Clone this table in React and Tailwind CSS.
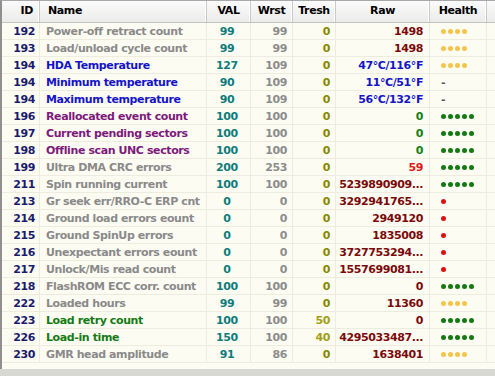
import React from 'react';

const rows = [
  { id: 192, name: 'Power-off retract count', nc: 'text-[#8a8a8a]', val: 99, wrst: 99, tresh: 0, raw: '1498', rc: 'text-[#7a0a0a]', health: 'y' },
  { id: 193, name: 'Load/unload cycle count', nc: 'text-[#8a8a8a]', val: 99, wrst: 99, tresh: 0, raw: '1498', rc: 'text-[#7a0a0a]', health: 'y' },
  { id: 194, name: 'HDA Temperature', nc: 'text-[#1414c8]', val: 127, wrst: 109, tresh: 0, raw: '47°C/116°F', rc: 'text-[#1414c8]', health: 'y' },
  { id: 194, name: 'Minimum temperature', nc: 'text-[#1414c8]', val: 90, wrst: 109, tresh: 0, raw: '11°C/51°F', rc: 'text-[#1414c8]', health: '-' },
  { id: 194, name: 'Maximum temperature', nc: 'text-[#1414c8]', val: 90, wrst: 109, tresh: 0, raw: '56°C/132°F', rc: 'text-[#1414c8]', health: '-' },
  { id: 196, name: 'Reallocated event count', nc: 'text-[#7c1a7c]', val: 100, wrst: 100, tresh: 0, raw: '0', rc: 'text-[#138013]', health: 'g' },
  { id: 197, name: 'Current pending sectors', nc: 'text-[#7c1a7c]', val: 100, wrst: 100, tresh: 0, raw: '0', rc: 'text-[#138013]', health: 'g' },
  { id: 198, name: 'Offline scan UNC sectors', nc: 'text-[#7c1a7c]', val: 100, wrst: 100, tresh: 0, raw: '0', rc: 'text-[#138013]', health: 'g' },
  { id: 199, name: 'Ultra DMA CRC errors', nc: 'text-[#8a8a8a]', val: 200, wrst: 253, tresh: 0, raw: '59', rc: 'text-[#e01818]', health: 'g' },
  { id: 211, name: 'Spin running current', nc: 'text-[#8a8a8a]', val: 100, wrst: 100, tresh: 0, raw: '5239890909...', rc: 'text-[#7a0a0a]', health: 'g' },
  { id: 213, name: 'Gr seek err/RRO-C ERP cnt', nc: 'text-[#8a8a8a]', val: 0, wrst: 0, tresh: 0, raw: '3292941765...', rc: 'text-[#7a0a0a]', health: 'r' },
  { id: 214, name: 'Ground load errors eount', nc: 'text-[#8a8a8a]', val: 0, wrst: 0, tresh: 0, raw: '2949120', rc: 'text-[#7a0a0a]', health: 'r' },
  { id: 215, name: 'Ground SpinUp errors', nc: 'text-[#8a8a8a]', val: 0, wrst: 0, tresh: 0, raw: '1835008', rc: 'text-[#7a0a0a]', health: 'r' },
  { id: 216, name: 'Unexpectant errors eount', nc: 'text-[#8a8a8a]', val: 0, wrst: 0, tresh: 0, raw: '3727753294...', rc: 'text-[#7a0a0a]', health: 'r' },
  { id: 217, name: 'Unlock/Mis read count', nc: 'text-[#8a8a8a]', val: 0, wrst: 0, tresh: 0, raw: '1557699081...', rc: 'text-[#7a0a0a]', health: 'r' },
  { id: 218, name: 'FlashROM ECC corr. count', nc: 'text-[#8a8a8a]', val: 100, wrst: 100, tresh: 0, raw: '0', rc: 'text-[#7a0a0a]', health: 'g' },
  { id: 222, name: 'Loaded hours', nc: 'text-[#8a8a8a]', val: 99, wrst: 99, tresh: 0, raw: '11360', rc: 'text-[#7a0a0a]', health: 'y' },
  { id: 223, name: 'Load retry count', nc: 'text-[#147a14]', val: 100, wrst: 100, tresh: 50, raw: '0', rc: 'text-[#7a0a0a]', health: 'g' },
  { id: 226, name: 'Load-in time', nc: 'text-[#147a14]', val: 150, wrst: 100, tresh: 40, raw: '4295033487...', rc: 'text-[#7a0a0a]', health: 'g' },
  { id: 230, name: 'GMR head amplitude', nc: 'text-[#8a8a8a]', val: 91, wrst: 86, tresh: 0, raw: '1638401', rc: 'text-[#7a0a0a]', health: 'y' },
];

const cols = 'grid grid-cols-[38px_167px_44px_42px_43px_94px_57px_1fr]';

const Health = ({ h }) => {
  if (h === '-') return <span className="text-[#555]">-</span>;
  if (h === 'r') return <span className="w-[5px] h-[5px] rounded-full bg-[#e01010]" />;
  const n = h === 'g' ? 5 : 4;
  const c = h === 'g' ? 'bg-[#137a13] w-[5px] h-[5px]' : 'bg-[#f5c54a] w-[5px] h-[5px]';
  return (
    <span className="flex gap-[2px]">
      {Array.from({ length: n }).map((_, i) => <span key={i} className={`${c} rounded-full`} />)}
    </span>
  );
};

const Head = ({ children, className = '' }) => (
  <div className={`h-full flex items-center border-r border-r-[#c9c9c9] shadow-[inset_-1px_0_0_#ffffff] ${className}`}>{children}</div>
);

export default function App() {
  return (
    <div className="w-[495px] h-[376px] flex flex-col bg-[#d8d8d2] overflow-hidden text-[11px] font-bold tracking-[-0.4px]"
      style={{ fontFamily: 'Tahoma, "DejaVu Sans", sans-serif' }}>
      <div className="flex-1 flex flex-col border-l-2 border-t border-l-[#8f8f8f] border-t-[#a8a8a8] bg-[#fdfcf3] mb-[7px]">
        {/* header */}
        <div className={`${cols} h-[22px] bg-gradient-to-b from-[#fbfbfb] to-[#ebebea] border-b border-b-[#c2c2c2] text-black`}>
          <Head className="justify-end pr-[6px]">ID</Head>
          <Head className="pl-[8px]">Name</Head>
          <Head className="justify-center">VAL</Head>
          <Head className="justify-center">Wrst</Head>
          <Head className="justify-center">Tresh</Head>
          <Head className="justify-center">Raw</Head>
          <Head className="justify-center">Health</Head>
          <div />
        </div>
        {/* rows */}
        {rows.map((r, i) => (
          <div key={i} className={`${cols} h-[17px] border-b border-b-[#eeecdf] leading-none`}>
            <div className="flex items-center justify-end pr-[4px] text-[#1b1b6b] border-r border-r-[#eeecdf]">{r.id}</div>
            <div className={`flex items-center pl-[6px] whitespace-nowrap overflow-hidden border-r border-r-[#eeecdf] ${r.nc}`}>{r.name}</div>
            <div className="flex items-center justify-center pr-[3px] text-[#0e7c7c] border-r border-r-[#eeecdf]">{r.val}</div>
            <div className="flex items-center justify-end pr-[5px] text-[#8c8c8c] border-r border-r-[#eeecdf]">{r.wrst}</div>
            <div className={`flex items-center justify-end pr-[5px] border-r border-r-[#eeecdf] ${r.tresh ? 'text-[#a0a018]' : 'text-[#888800]'}`}>{r.tresh}</div>
            <div className={`flex items-center justify-end pr-[6px] whitespace-nowrap border-r border-r-[#eeecdf] ${r.rc}`}>{r.raw}</div>
            <div className="flex items-center pl-[11px] border-r border-r-[#eeecdf]"><Health h={r.health} /></div>
            <div />
          </div>
        ))}
        <div className="flex-1" />
      </div>
    </div>
  );
}
